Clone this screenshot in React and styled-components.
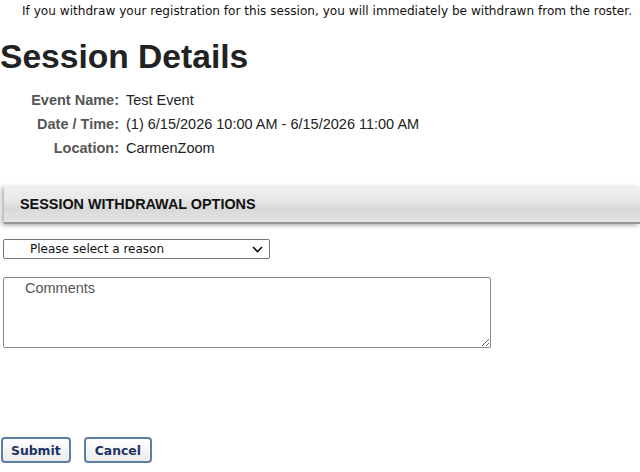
import React from "react";
import styled, { createGlobalStyle } from "styled-components";

const Global = createGlobalStyle`
  html, body { margin: 0; padding: 0; background: #fff; }
  body { font-family: "Liberation Sans", Arial, sans-serif; color: #222; }
`;

const Page = styled.div`
  width: 640px;
  height: 472px;
  overflow: hidden;
  display: flex;
  flex-direction: column;
`;

const Notice = styled.p`
  margin: 0;
  padding: 4px 0 0 22px;
  font-family: "DejaVu Sans", Verdana, sans-serif;
  font-size: 12.1px;
  line-height: 15px;
  color: #111;
  white-space: nowrap;
`;

const Title = styled.h1`
  margin: 19px 0 0 0;
  font-size: 33.6px;
  line-height: 38px;
  font-weight: bold;
  color: #222;
`;

const Details = styled.div`
  display: grid;
  grid-template-columns: 119px auto;
  column-gap: 7px;
  row-gap: 8px;
  margin-top: 16px;
  font-size: 14.5px;
  line-height: 16px;
`;

const Label = styled.div`
  text-align: right;
  font-weight: bold;
  color: #555;
`;

const Value = styled.div`
  color: #222;
`;

const SectionBar = styled.div`
  margin-top: 30px;
  margin-left: 4px;
  height: 36px;
  display: flex;
  align-items: center;
  padding-left: 16px;
  font-size: 14.4px;
  font-weight: bold;
  color: #111;
  background: linear-gradient(to bottom, #f0f0f0 0%, #e8e8e8 35%, #d8d8d8 65%, #e2e2e2 90%, #e4e4e4 100%);
  border-bottom: 2px solid #979797;
  box-shadow: -3px 1px 4px rgba(0,0,0,0.25), 0 3px 3px rgba(0,0,0,0.08);
`;

const Select = styled.div`
  margin: 15px 0 0 3px;
  width: 267px;
  height: 20px;
  box-sizing: border-box;
  border: 1px solid #767676;
  border-radius: 2px;
  display: flex;
  align-items: center;
  justify-content: space-between;
  padding: 0 6px 0 26px;
  font-family: "DejaVu Sans", Verdana, sans-serif;
  font-size: 12px;
  color: #111;
`;

const TextArea = styled.textarea`
  margin: 18px 0 0 3px;
  width: 488px;
  height: 71px;
  box-sizing: border-box;
  border: 1px solid #8a8a8a;
  border-radius: 2px;
  padding: 2px 21px;
  font-family: "Liberation Sans", Arial, sans-serif;
  font-size: 14.5px;
  resize: vertical;
  display: block;
  &::placeholder { color: #555; opacity: 1; }
`;

const Actions = styled.div`
  margin-top: 89px;
  margin-left: 1px;
  display: flex;
  gap: 13px;
`;

const Button = styled.button`
  height: 26px;
  padding: 0 ${p => p.$pad}px;
  border: 2px solid #5b7fa6;
  border-radius: 4px;
  background: linear-gradient(to bottom, #ffffff, #ececec);
  font-family: "DejaVu Sans", Verdana, sans-serif;
  font-weight: bold;
  font-size: 12.4px;
  color: #1c3464;
`;

const Chevron = () => (
  <svg width="11" height="7" viewBox="0 0 11 7">
    <path d="M1 1 L5.5 5.5 L10 1" fill="none" stroke="#111" strokeWidth="1.6" />
  </svg>
);

export default function App() {
  return (
    <Page>
      <Global />
      <Notice>If you withdraw your registration for this session, you will immediately be withdrawn from the roster.</Notice>
      <Title>Session Details</Title>
      <Details>
        <Label>Event Name:</Label><Value>Test Event</Value>
        <Label>Date / Time:</Label><Value>(1) 6/15/2026 10:00 AM - 6/15/2026 11:00 AM</Value>
        <Label>Location:</Label><Value>CarmenZoom</Value>
      </Details>
      <SectionBar>SESSION WITHDRAWAL OPTIONS</SectionBar>
      <Select>
        <span>Please select a reason</span>
        <Chevron />
      </Select>
      <TextArea placeholder="Comments" />
      <Actions>
        <Button $pad={8}>Submit</Button>
        <Button $pad={9}>Cancel</Button>
      </Actions>
    </Page>
  );
}
